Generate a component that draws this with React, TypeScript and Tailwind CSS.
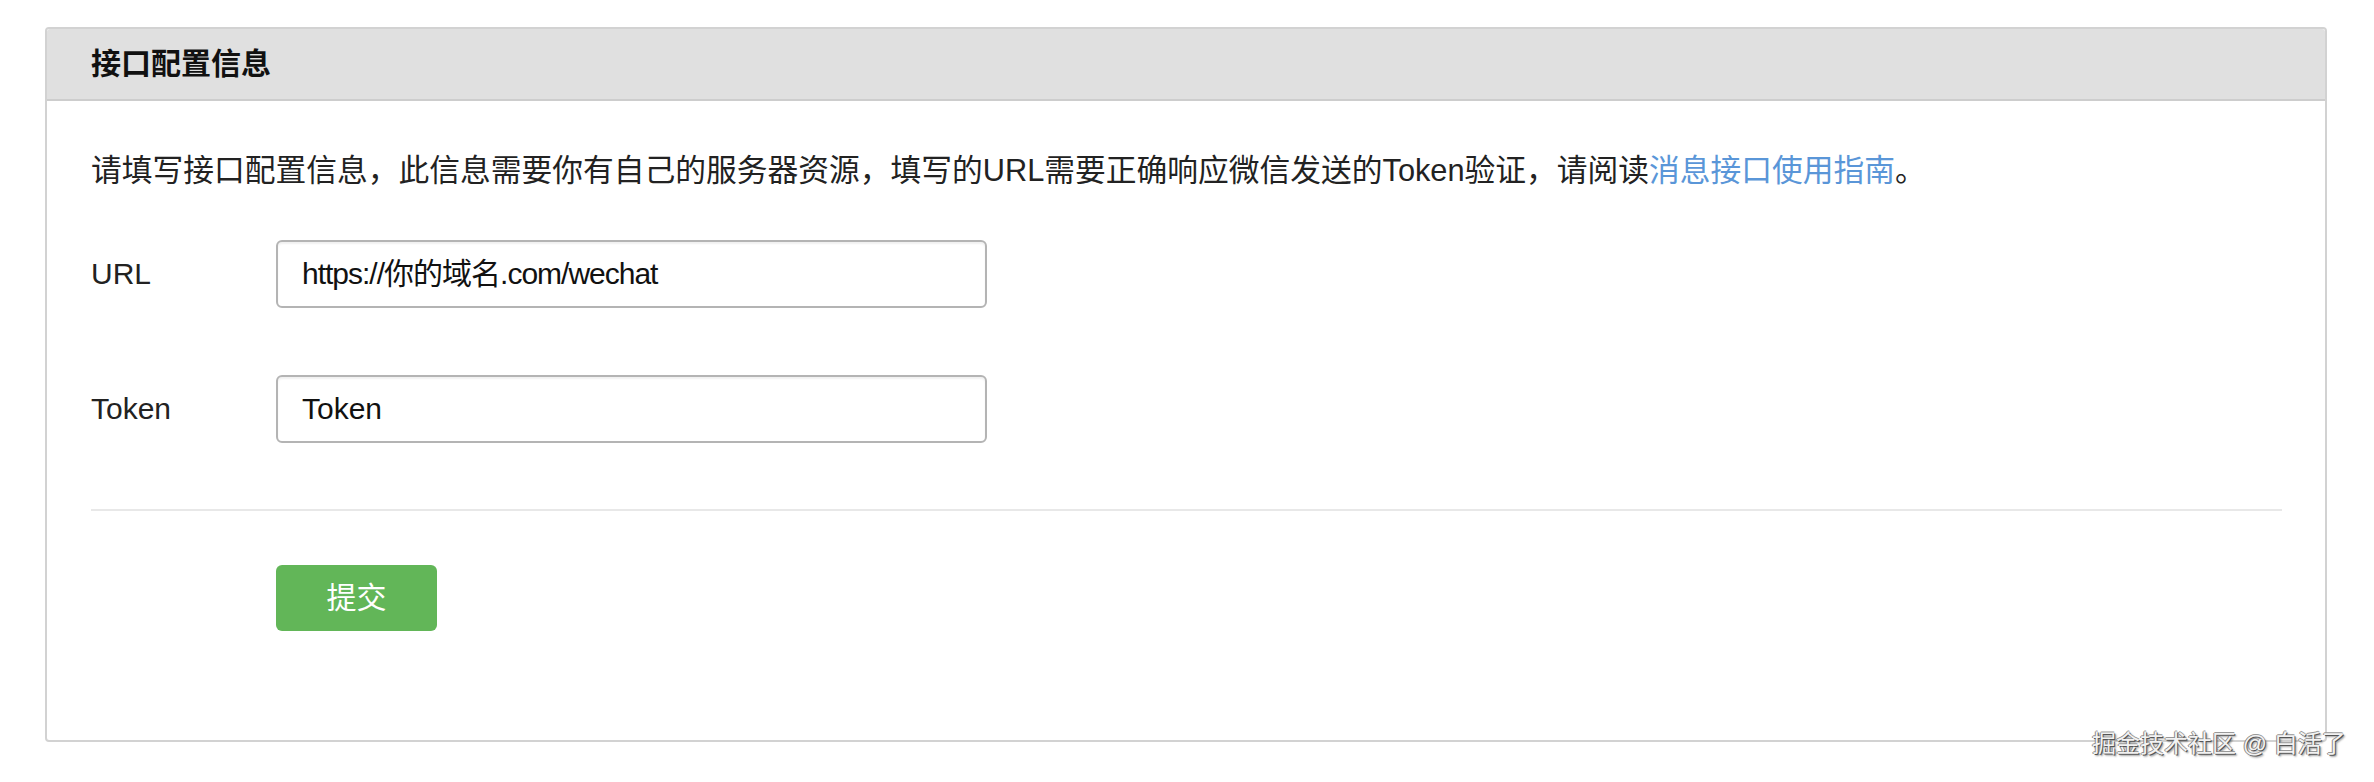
export default function App() {
  const font = { fontFamily: '"Liberation Sans", "Noto Sans CJK SC", sans-serif' };

  return (
    <div className="relative w-[2374px] h-[782px] bg-white pt-[27px] pl-[45px]" style={font}>
      {/* Card */}
      <div className="w-[2282px] h-[715px] border-2 border-[#d2d2d2] rounded-[4px] bg-white flex flex-col">
        {/* Header */}
        <div className="h-[72px] bg-[#e0e0e0] border-b-2 border-[#cdcdcd] flex items-center pl-[44px] rounded-t-[3px]">
          <h2 className="text-[30px] font-bold text-[#111] leading-none">接口配置信息</h2>
        </div>

        {/* Body */}
        <div className="flex flex-col pl-[44px] pr-[44px]">
          <p className="mt-[47px] text-[30.75px] leading-[45px] text-[#222]">
            请填写接口配置信息，此信息需要你有自己的服务器资源，填写的URL需要正确响应微信发送的Token验证，请阅读
            <a className="text-[#5a96d8]">消息接口使用指南</a>。
          </p>

          <div className="mt-[47px] flex items-center">
            <label className="w-[185px] text-[30px] text-[#222] leading-none">URL</label>
            <div className="w-[711px] h-[68px] border-2 border-[#b4b4b4] rounded-[6px] flex items-center pl-[24px] shadow-[inset_0_2px_2px_rgba(0,0,0,0.06)]">
              <span className="text-[30px] tracking-[-1px] text-[#111] leading-none">https://你的域名.com/wechat</span>
            </div>
          </div>

          <div className="mt-[67px] flex items-center">
            <label className="w-[185px] text-[30px] text-[#222] leading-none">Token</label>
            <div className="w-[711px] h-[68px] border-2 border-[#b4b4b4] rounded-[6px] flex items-center pl-[24px] shadow-[inset_0_2px_2px_rgba(0,0,0,0.06)]">
              <span className="text-[30px] text-[#111] leading-none">Token</span>
            </div>
          </div>

          <div className="mt-[66px] h-[2px] bg-[#e8e8e8] w-[2191px]" />

          <div className="mt-[54px] pl-[185px]">
            <button className="w-[161px] h-[66px] rounded-[6px] bg-[#62b658] text-white text-[30px] leading-none">
              提交
            </button>
          </div>
        </div>
      </div>

      {/* Watermark */}
      <div className="absolute left-[2092px] top-[732px] text-[24px] leading-none whitespace-nowrap text-[#f2f2f2] [text-shadow:1px_1px_0_#555,-1px_0_0_#888,0_-1px_0_#999,2px_2px_2px_rgba(0,0,0,0.4)]">
        掘金技术社区 @ 白活了
      </div>
    </div>
  );
}
